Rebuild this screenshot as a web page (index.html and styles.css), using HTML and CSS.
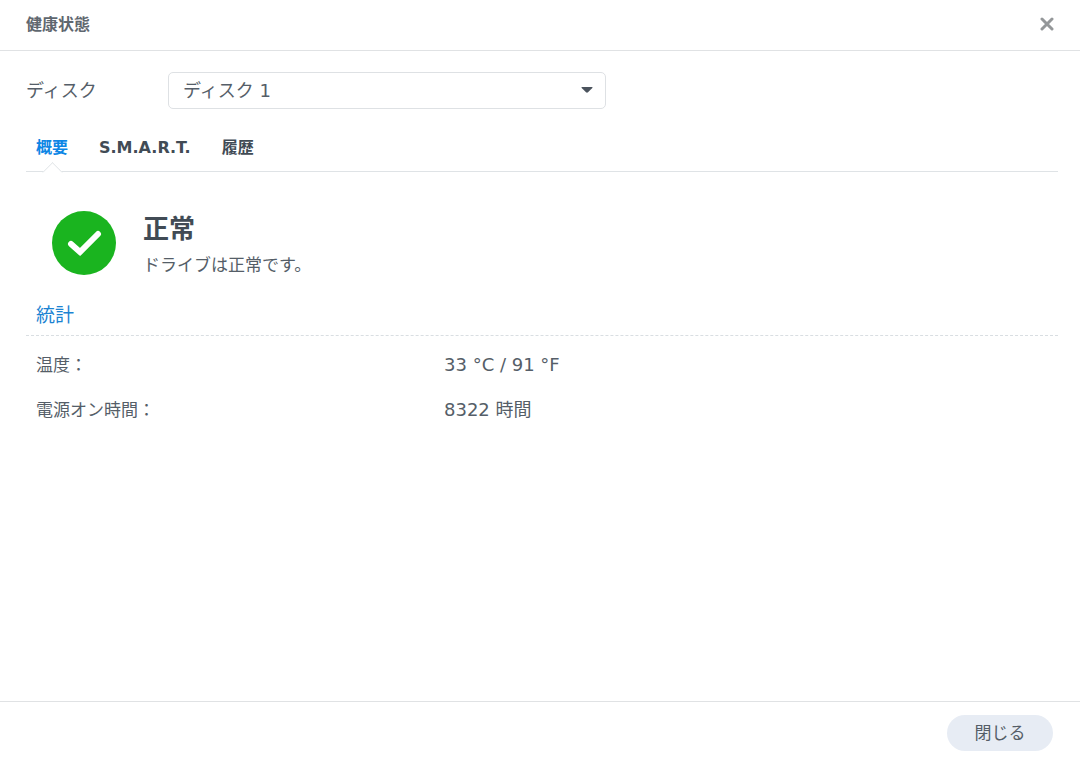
FILE: index.html
```html
<!DOCTYPE html>
<html lang="ja">
<head>
  <meta charset="UTF-8" />
  <meta name="viewport" content="width=device-width, initial-scale=1.0"/>
  <title>健康状態</title>
  <link rel="stylesheet" href="styles.css">
</head>
<body>
  <header class="title-bar">
    <h1>健康状態</h1>
    <button class="close" type="button" aria-label="閉じる">
      <svg width="14" height="14" viewBox="0 0 14 14"><path d="M2 2L12 12M12 2L2 12" /></svg>
    </button>
  </header>

  <main>
    <div class="disk-row">
      <label for="disk">ディスク</label>
      <div class="select-box">
        <select id="disk">
          <option>ディスク 1</option>
        </select>
        <svg class="arrow" width="12" height="6" viewBox="0 0 12 6"><path d="M1 0H11Q12 0 11.300 .9L7 5.300Q6 6.200 5 5.300L.7 .9Q0 0 1 0Z" /></svg>
      </div>
    </div>

    <nav class="tabs">
      <button class="tab active" type="button">概要</button>
      <button class="tab" type="button">S.M.A.R.T.</button>
      <button class="tab" type="button">履歴</button>
    </nav>

    <section class="status">
      <svg class="status-icon" width="64" height="64" viewBox="0 0 64 64">
        <circle cx="32" cy="32" r="32" />
        <path d="M19 33L28 41L46 23" />
      </svg>
      <div>
        <h2>正常</h2>
        <p>ドライブは正常です。</p>
      </div>
    </section>

    <section>
      <h3>統計</h3>
      <dl class="stats">
        <dt>温度：</dt>
        <dd>33 °C / 91 °F</dd>
        <dt>電源オン時間：</dt>
        <dd>8322 時間</dd>
      </dl>
    </section>
  </main>

  <footer>
    <button class="done" type="button">閉じる</button>
  </footer>
</body>
</html>
```
FILE: styles.css
```css
* { box-sizing: border-box; }
body { margin: 0; min-height: 100vh; display: flex; flex-direction: column; background: #fff; color: #555e68; font: 17px/24px "DejaVu Sans", "Noto Sans CJK JP", sans-serif; }
h1, h2, h3, p, dl, dd { margin: 0; }
button, select { font: inherit; color: inherit; border: 0; background: none; padding: 0; cursor: pointer; }

.title-bar { height: 51px; padding: 0 24px 2px 26px; display: flex; align-items: center; justify-content: space-between; border-bottom: 1px solid #e0e2e4; }
h1 { padding-top: 2px; font-size: 16px; color: #5f676f; }
.close { width: 18px; height: 18px; display: flex; align-items: center; justify-content: center; }
.close path { fill: none; stroke: #949799; stroke-width: 3; stroke-linecap: round; }

main { flex: 1; padding: 21px 22px 0 26px; }
.disk-row { display: flex; align-items: center; font-size: 18px; }
.disk-row label { width: 142px; }
.select-box { position: relative; width: 438px; }
select { display: block; width: 100%; height: 37px; padding: 0 32px 0 14px; border: 1px solid #dee1e4; border-radius: 5px; appearance: none; }
.arrow { position: absolute; right: 13px; top: 15px; fill: #4b535d; pointer-events: none; }

.tabs { display: flex; gap: 31px; height: 63px; padding: 26px 10px 0; border-bottom: 1px solid #dfe3e6; }
.tab { position: relative; height: 37px; padding-bottom: 12px; font-size: 16px; font-weight: bold; color: #414b55; }
.active { color: #0d86e5; }
/* notch over the tab line */
.active::after { content: ""; position: absolute; left: 50%; bottom: -8px; width: 14px; height: 14px; margin-left: -7px; background: #fff; border: solid #dfe3e6; border-width: 1px 0 0 1px; transform: rotate(45deg); clip-path: polygon(0 0, 100% 0, 0 100%); }

.status { display: flex; gap: 27px; padding: 39px 26px 0; }
.status-icon circle { fill: #1ab41f; }
.status-icon path { fill: none; stroke: #fff; stroke-width: 6; stroke-linecap: round; stroke-linejoin: miter; }
h2 { font-size: 26px; line-height: 36px; color: #414b55; }
.status p { margin-top: 6px; }

h3 { margin-top: 22px; padding: 4px 10px 8px; font-size: 19px; font-weight: normal; color: #1b83d2; border-bottom: 1px dashed #d9dee2; }
.stats { display: grid; grid-template-columns: 408px 1fr; row-gap: 21px; padding: 17px 10px; }
.stats dd { font-size: 18px; }

footer { height: 58px; padding: 13px 27px 0; display: flex; justify-content: flex-end; border-top: 1px solid #e0e2e4; }
.done { width: 106px; height: 36px; border-radius: 18px; background: #e7ecf4; }
```
